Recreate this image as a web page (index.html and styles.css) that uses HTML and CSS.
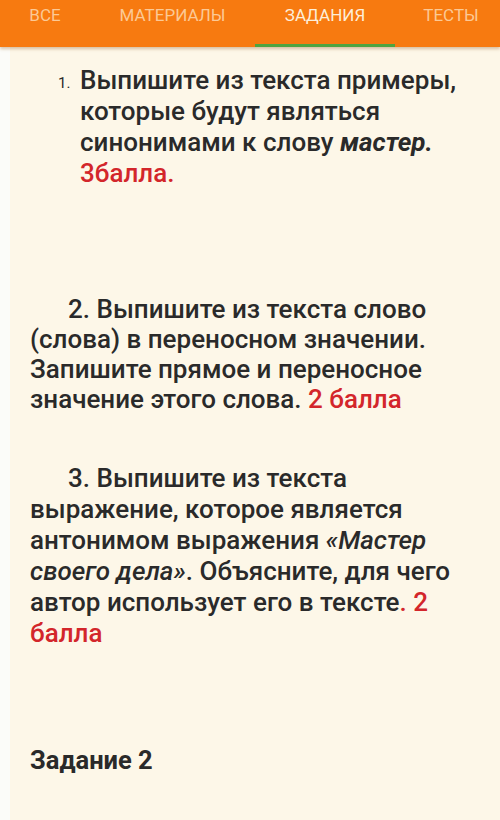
FILE: index.html
```html
<!DOCTYPE html>
<html lang="ru">
<head>
<meta charset="utf-8">
<link rel="stylesheet" href="styles.css">
</head>
<body>
<div class="tabs">
  <div class="tab">ВСЕ</div>
  <div class="tab">МАТЕРИАЛЫ</div>
  <div class="tab active">ЗАДАНИЯ</div>
  <div class="tab">ТЕСТЫ</div>
</div>
<div class="page">
  <div class="card">
    <div class="item1">
      <span class="num">1.</span>
      <p class="q">Выпишите из текста примеры, которые будут являться синонимами к слову <b><i>мастер.</i></b> <span class="red">3балла.</span></p>
    </div>
    <p class="q indent q2">2. Выпишите из текста слово (слова) в переносном значении. Запишите прямое и переносное значение этого слова. <span class="red">2 балла</span></p>
    <p class="q indent q3">3. Выпишите из текста выражение, которое является антонимом выражения <i>«Мастер своего дела»</i>. Объясните, для чего автор использует его в тексте<span class="red">. 2 балла</span></p>
    <p class="task">Задание 2</p>
  </div>
</div>
</body>
</html>
```
FILE: styles.css
```css
html, body {
  margin: 0;
  padding: 0;
}
body {
  width: 500px;
  height: 820px;
  overflow: hidden;
  background: #fbfcf9;
  font-family: Roboto, "Noto Sans", sans-serif;
  color: #2a2a2a;
}
.tabs {
  display: flex;
  height: 47px;
  background: #f77a10;
  box-shadow: 0 2px 3px rgba(150, 90, 30, 0.35);
  position: relative;
  z-index: 1;
}
.tab {
  font-size: 17px;
  color: #fcc995;
  display: flex;
  justify-content: center;
  padding-top: 5px;
  box-sizing: border-box;
  height: 47px;
}
.tab:nth-child(1) { width: 90px; }
.tab:nth-child(2) { width: 165px; }
.tab:nth-child(3) { width: 140px; color: #fdeed8; border-bottom: 3px solid #4fa43f; }
.tab:nth-child(4) { width: 105px; padding-left: 7px; }
.page {
  padding-left: 10px;
}
.card {
  background: #fdf7e8;
  height: 773px;
  padding: 0 14px 0 20px;
  box-sizing: border-box;
  overflow: hidden;
}
.q {
  margin: 0;
  font-size: 26px;
  font-weight: 500;
  line-height: 31px;
}
.item1 {
  display: flex;
  padding-top: 18px;
  padding-left: 28px;
}
.num {
  font-size: 15px;
  font-weight: 400;
  line-height: 31px;
  padding-top: 3px;
  width: 22px;
  flex: none;
}
.indent {
  text-indent: 38px;
}
.q2 {
  margin-top: 105px;
  line-height: 30px;
}
.q3 {
  margin-top: 49px;
}
.red {
  color: #d3262b;
}
.task {
  margin: 96px 0 0;
  font-size: 25.5px;
  line-height: 31px;
  font-weight: bold;
}
```
